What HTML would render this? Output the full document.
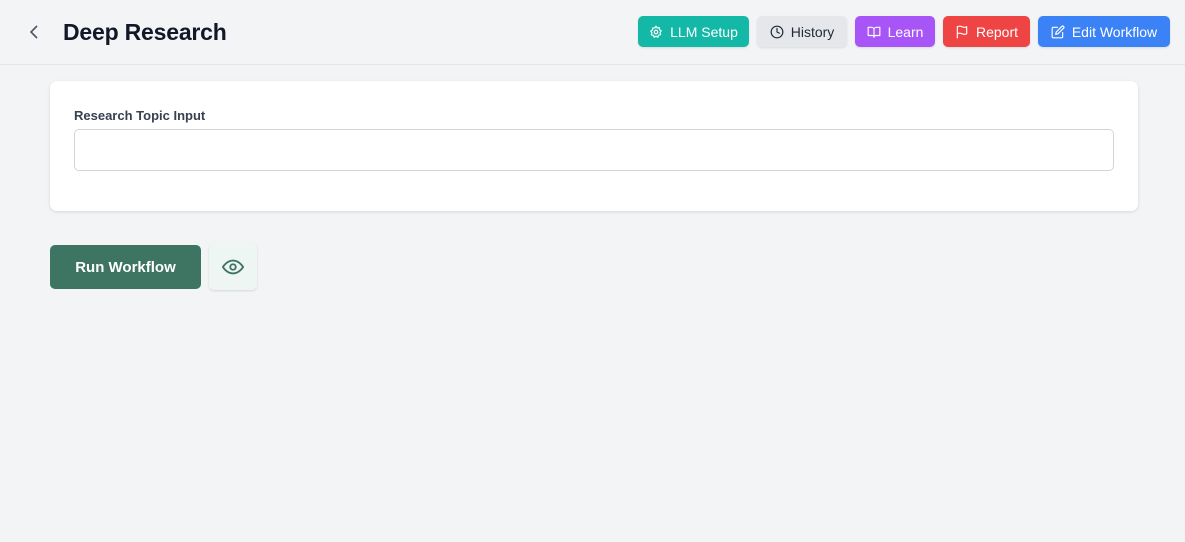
<!DOCTYPE html>
<html><head><style>
*{box-sizing:border-box;margin:0;padding:0}
body{width:1185px;height:542px;background:#f3f4f6;font-family:"Liberation Sans",sans-serif;position:relative;overflow:hidden}
.hdr{position:absolute;left:0;top:0;width:1185px;height:65px;border-bottom:1px solid #e2e4e8}
.back{position:absolute;left:27px;top:24px}
h1{position:absolute;left:63px;top:19px;font-size:23px;font-weight:bold;color:#111827;letter-spacing:-0.2px}
.b{position:absolute;top:16px;height:31px;border-radius:5px;color:#fff;font-size:14px;display:flex;align-items:center;justify-content:center;gap:7px;box-shadow:0 1px 2px rgba(0,0,0,.1)}
.b svg{width:14px;height:14px;fill:none;stroke:currentColor;stroke-width:2;stroke-linecap:round;stroke-linejoin:round}
.card{position:absolute;left:50px;top:81px;width:1088px;height:130px;background:#fff;border-radius:7px;box-shadow:0 1px 3px rgba(0,0,0,.12)}
.lbl{position:absolute;left:24px;top:27px;font-size:13px;font-weight:bold;color:#374151}
.inp{position:absolute;left:24px;top:48px;width:1040px;height:42px;border:1px solid #d1d5db;border-radius:5px}
.run{position:absolute;left:50px;top:245px;width:151px;height:44px;background:#3e7462;border-radius:5px;color:#fff;font-weight:bold;font-size:15px;display:flex;align-items:center;justify-content:center}
.eye{position:absolute;left:209px;top:243px;width:48px;height:47px;background:#edf6f2;border-radius:5px;box-shadow:0 1px 2px rgba(0,0,0,.12);display:flex;align-items:center;justify-content:center}
</style></head><body>
<div class="hdr">
<svg class="back" width="14" height="16" viewBox="0 0 14 16"><path d="M10 2 L4 8 L10 14" fill="none" stroke="#4b5563" stroke-width="1.6"/></svg>
<h1>Deep Research</h1>
<div class="b" style="left:638px;width:111px;background:#14b8a6"><svg viewBox="0 0 24 24"><circle cx="12" cy="12" r="3"/><path d="M12 2l2 3 3.5-.5.5 3.5 3 2-2 3 1 3.5-3.5 1-1.5 3.5-3-2-3 2-1.5-3.5L4 17l1-3.5-2-3 3-2 .5-3.5L10 5z"/></svg>LLM Setup</div>
<div class="b" style="left:757px;width:90px;background:#e5e7eb;color:#1f2937"><svg viewBox="0 0 24 24"><circle cx="12" cy="12" r="10"/><path d="M12 6v6l4 2"/></svg>History</div>
<div class="b" style="left:855px;width:80px;background:#a855f7"><svg viewBox="0 0 24 24"><path d="M2 4h6a4 4 0 0 1 4 4v13a3 3 0 0 0-3-3H2zM22 4h-6a4 4 0 0 0-4 4v13a3 3 0 0 1 3-3h7z"/></svg>Learn</div>
<div class="b" style="left:943px;width:87px;background:#ef4444"><svg viewBox="0 0 24 24"><path d="M4 22V3M4 15s1-1 4-1 5 2 8 2 4-1 4-1V3s-1 1-4 1-5-2-8-2-4 1-4 1"/></svg>Report</div>
<div class="b" style="left:1038px;width:132px;background:#3b82f6"><svg viewBox="0 0 24 24"><path d="M11 4H4a2 2 0 0 0-2 2v14a2 2 0 0 0 2 2h14a2 2 0 0 0 2-2v-7"/><path d="M18.5 2.5a2.1 2.1 0 0 1 3 3L12 15l-4 1 1-4z"/></svg>Edit Workflow</div>
</div>
<div class="card"><div class="lbl">Research Topic Input</div><div class="inp"></div></div>
<div class="run">Run Workflow</div>
<div class="eye"><svg width="22" height="22" viewBox="0 0 24 24" fill="none" stroke="#3e7462" stroke-width="2"><path d="M1 12s4-7 11-7 11 7 11 7-4 7-11 7S1 12 1 12z"/><circle cx="12" cy="12" r="3"/></svg></div>
</body></html>
